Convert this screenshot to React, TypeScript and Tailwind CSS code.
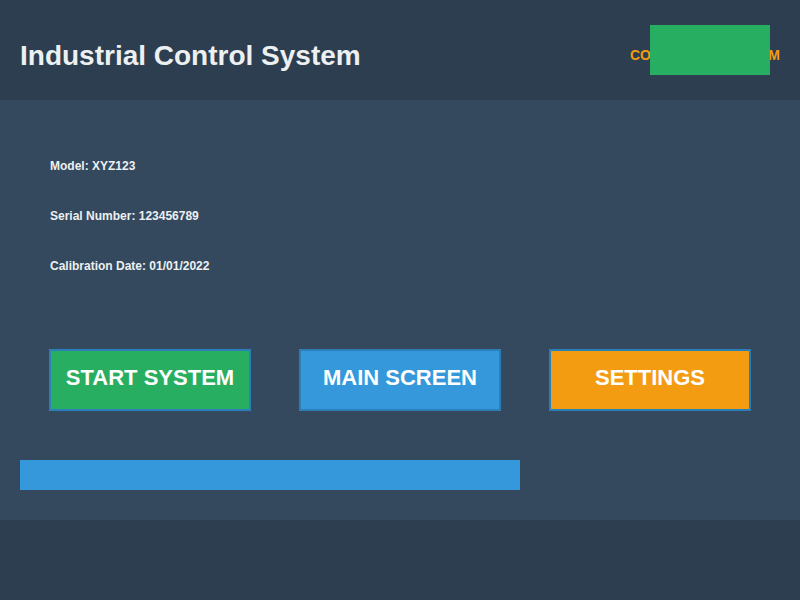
const font = { fontFamily: '"Liberation Sans", Arial, sans-serif' };

const InfoLine = ({ label, value }: { label: string; value: string }) => (
   <p className="h-[20px] flex items-center text-[12px] font-bold text-[#ecf0f1]">
      {label}: {value}
   </p>
);

const ControlButton = ({ text, color }: { text: string; color: string }) => (
   <button
      className={`w-[202px] h-[62px] pb-[5px] border-2 border-[#2980b9] text-white text-[22px] font-bold ${color}`}
   >
      {text}
   </button>
);

export default function App() {
   return (
      <div className="w-[800px] h-[600px] bg-[#2c3e50]" style={font}>
         <header className="relative h-[100px] px-5 flex items-center justify-between bg-[#2c3e50]">
            <h1 className="text-[28px] font-bold text-[#ecf0f1] mt-[12px]">Industrial Control System</h1>
            <span className="text-[14px] font-bold text-[#f39c12] mt-[10px]">CONNECTED SYSTEM</span>
            <div className="absolute top-[25px] right-[30px] w-[120px] h-[50px] bg-[#27ae60]" />
         </header>

         <main className="h-[420px] bg-[#34495e] px-5 pt-[56px]">
            <div className="ml-[30px] flex flex-col gap-[30px]">
               <InfoLine label="Model" value="XYZ123" />
               <InfoLine label="Serial Number" value="123456789" />
               <InfoLine label="Calibration Date" value="01/01/2022" />
            </div>

            <div className="mt-[73px] ml-[29px] flex gap-[48px]">
               <ControlButton text="START SYSTEM" color="bg-[#27ae60]" />
               <ControlButton text="MAIN SCREEN" color="bg-[#3498db]" />
               <ControlButton text="SETTINGS" color="bg-[#f39c12]" />
            </div>

            <div className="mt-[49px] w-[500px] h-[30px] bg-[#3498db]" />
         </main>
      </div>
   );
}
